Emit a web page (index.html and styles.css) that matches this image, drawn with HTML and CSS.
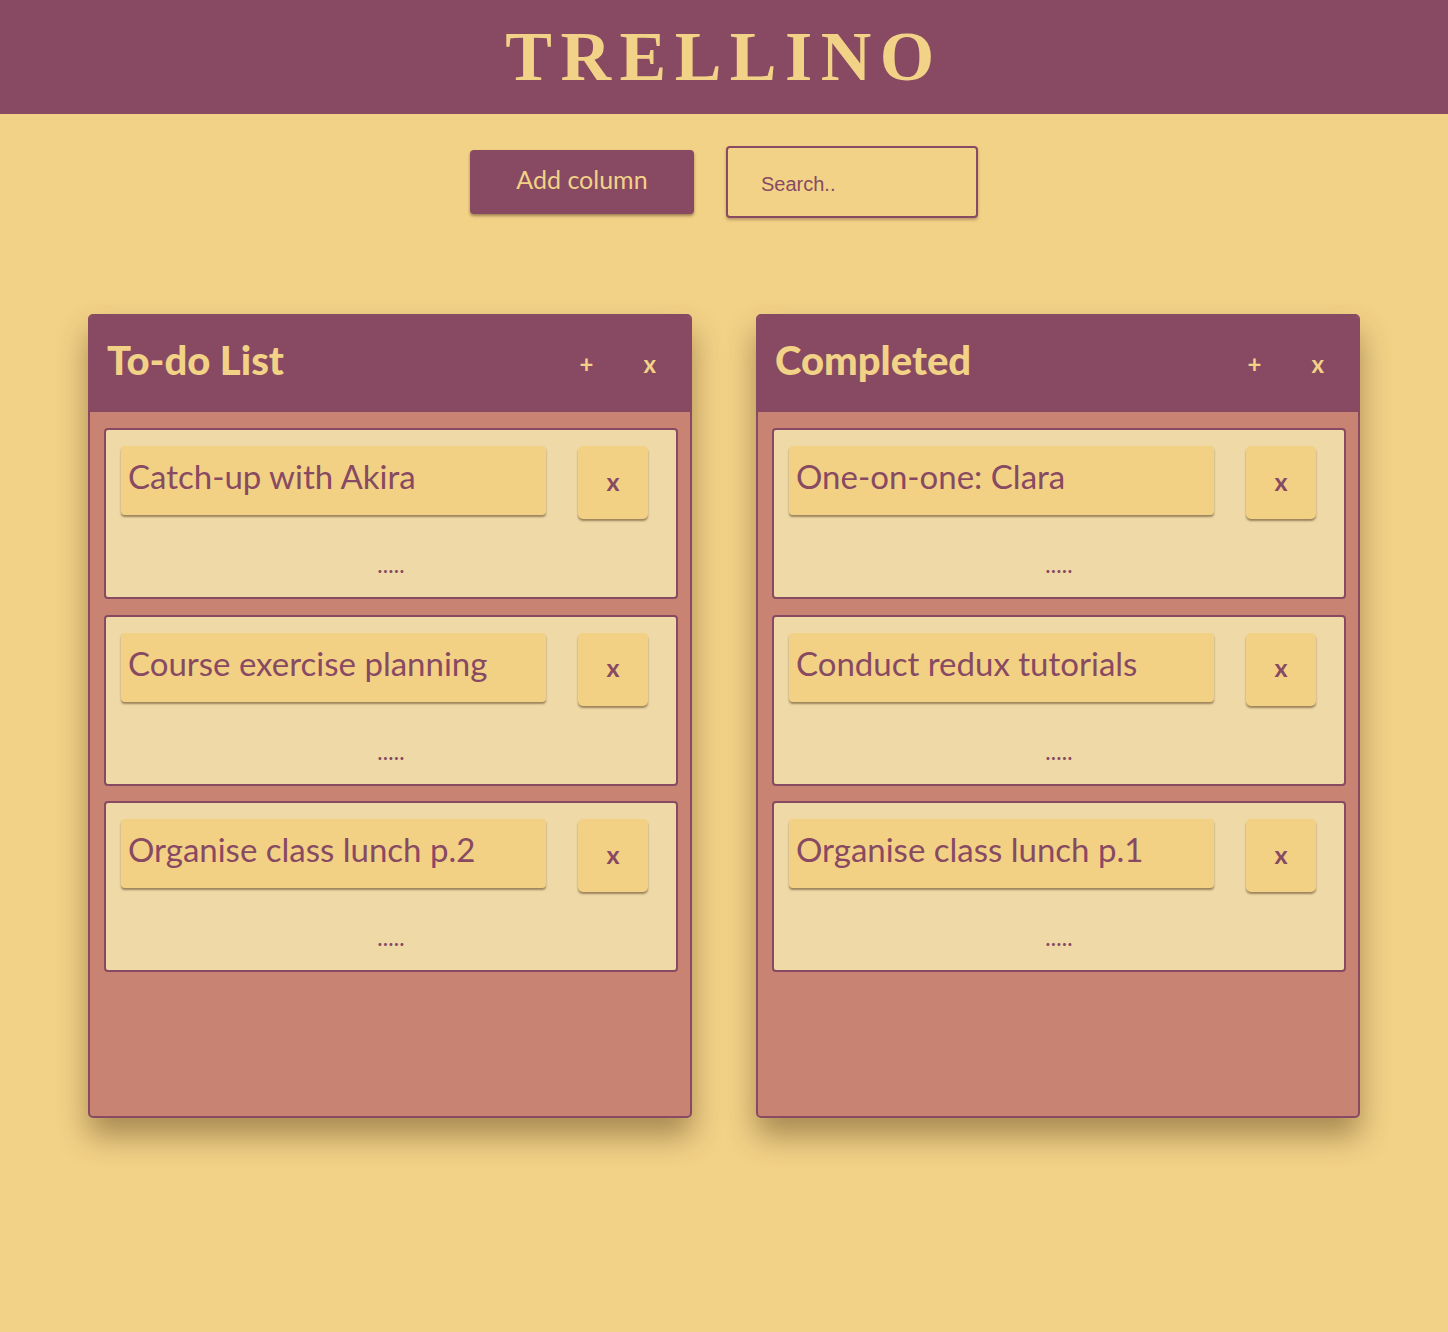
FILE: index.html
```html
<!DOCTYPE html>
<html>
<head>
<meta charset="utf-8">
<link rel="stylesheet" href="styles.css">
</head>
<body>
<header class="topbar"><h1 class="logo">TRELLINO</h1></header>
<div class="controls">
  <button class="add-col">Add column</button>
  <input class="search" type="text" placeholder="Search..">
</div>
<main class="board">
  <section class="column">
    <div class="col-head">
      <h2 class="col-title">To-do List</h2>
      <div class="col-actions"><span class="act">+</span><span class="act">x</span></div>
    </div>
    <div class="col-body">
      <div class="card">
        <div class="card-row"><div class="card-title">Catch-up with Akira</div><div class="card-x">x</div></div>
        <div class="dots">.....</div>
      </div>
      <div class="card">
        <div class="card-row"><div class="card-title">Course exercise planning</div><div class="card-x">x</div></div>
        <div class="dots">.....</div>
      </div>
      <div class="card">
        <div class="card-row"><div class="card-title">Organise class lunch p.2</div><div class="card-x">x</div></div>
        <div class="dots">.....</div>
      </div>
    </div>
  </section>
  <section class="column">
    <div class="col-head">
      <h2 class="col-title">Completed</h2>
      <div class="col-actions"><span class="act">+</span><span class="act">x</span></div>
    </div>
    <div class="col-body">
      <div class="card">
        <div class="card-row"><div class="card-title">One-on-one: Clara</div><div class="card-x">x</div></div>
        <div class="dots">.....</div>
      </div>
      <div class="card">
        <div class="card-row"><div class="card-title">Conduct redux tutorials</div><div class="card-x">x</div></div>
        <div class="dots">.....</div>
      </div>
      <div class="card">
        <div class="card-row"><div class="card-title">Organise class lunch p.1</div><div class="card-x">x</div></div>
        <div class="dots">.....</div>
      </div>
    </div>
  </section>
</main>
</body>
</html>
```
FILE: styles.css
```css
* { box-sizing: border-box; }
body {
  margin: 0;
  background: #f2d287;
  font-family: Lato, "Noto Sans", sans-serif;
  color: #874a62;
  min-height: 1332px;
}
.topbar {
  height: 114px;
  background: #874a62;
  display: flex;
  justify-content: center;
  align-items: center;
}
.logo {
  margin: 0;
  font-family: "Liberation Serif", serif;
  font-weight: bold;
  font-size: 70px;
  line-height: 1;
  letter-spacing: 8.5px;
  color: #f2d287;
  padding-left: 0;
}
.controls {
  display: flex;
  justify-content: center;
  align-items: center;
  gap: 32px;
  margin-top: 32px;
}
.add-col {
  width: 224px;
  height: 64px;
  background: #874a62;
  color: #f2d287;
  border: none;
  border-radius: 4px;
  font-family: Lato, sans-serif;
  font-size: 25px;
  padding: 0 0 6px;
  box-shadow: 0 2px 3px rgba(60, 30, 20, 0.45);
}
.search {
  width: 252px;
  height: 72px;
  background: #f2d287;
  border: 2px solid #874a62;
  border-radius: 4px;
  padding: 4px 0 0 33px;
  font-family: "Liberation Sans", Arial, sans-serif;
  font-size: 20px;
  color: #874a62;
  box-shadow: 0 2px 3px rgba(60, 30, 20, 0.3);
}
.search::placeholder { color: #874a62; }
.board {
  display: flex;
  justify-content: center;
  gap: 64px;
  margin-top: 96px;
}
.column {
  width: 604px;
  height: 804px;
  border: 2px solid #874a62;
  border-radius: 5px;
  background: #c88373;
  overflow: hidden;
  box-shadow: 0 18px 30px rgba(80, 50, 20, 0.45);
}
.col-head {
  height: 96px;
  background: #874a62;
  display: flex;
  align-items: flex-start;
  justify-content: space-between;
  padding: 20px 34px 0 17px;
}
.col-title {
  margin: 0;
  font-size: 40px;
  font-weight: 900;
  line-height: 48px;
  color: #f2d287;
}
.col-actions {
  display: flex;
  gap: 50px;
  padding-top: 14px;
}
.act {
  font-size: 24px;
  font-weight: bold;
  color: #f2d287;
  line-height: 28px;
}
.col-body {
  display: flex;
  flex-direction: column;
  gap: 15.5px;
  padding: 16px 12px 0 14px;
}
.card {
  height: 171px;
  background: #eed9a7;
  border: 2px solid #874a62;
  border-radius: 4px;
  padding-top: 16px;
  display: flex;
  flex-direction: column;
}
.card-row {
  display: flex;
  justify-content: space-between;
  align-items: flex-start;
  padding: 0 28px 0 15px;
}
.card-title {
  width: 425px;
  height: 69px;
  background: #f2d185;
  border-radius: 4px;
  padding: 8px 0 0 7px;
  font-size: 33px;
  line-height: 44px;
  box-shadow: 0 2px 2px rgba(90, 60, 30, 0.55);
  white-space: nowrap;
}
.card-x {
  width: 70px;
  height: 73px;
  background: #f2d185;
  border-radius: 5px;
  display: flex;
  align-items: center;
  justify-content: center;
  font-size: 25px;
  font-weight: bold;
  padding-bottom: 4px;
  box-shadow: 0 2px 2px rgba(90, 60, 30, 0.55);
}
.dots {
  text-align: center;
  font-size: 18px;
  font-weight: 900;
  line-height: 20px;
  margin-top: 37px;
  letter-spacing: 1.2px;
  padding-left: 1px;
}
```
